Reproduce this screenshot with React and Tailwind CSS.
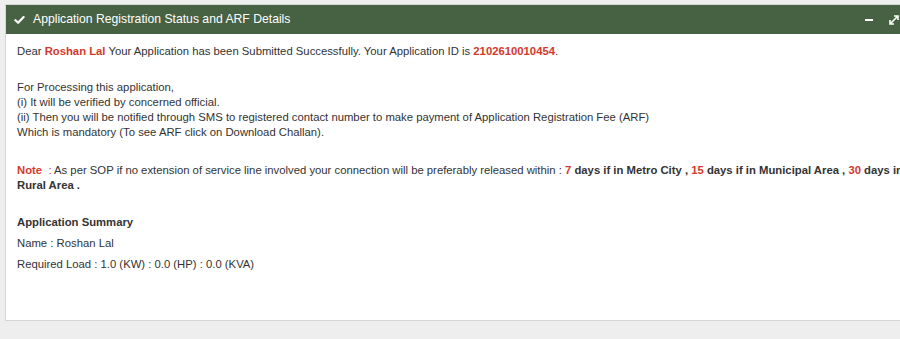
export default function App() {
  return (
    <div className="w-[900px] h-[339px] overflow-hidden bg-[#eeeeee] pt-[4px] pl-[5px] font-['Liberation_Sans',Arial,sans-serif]">
      <div className="w-[920px] border border-[#d6d6d6] bg-white">
        {/* Header */}
        <div className="h-[29px] bg-[#476243] flex items-center text-white">
          <svg className="ml-[8px] w-[11px] h-[10px]" viewBox="0 0 12 10" fill="none">
            <path d="M1.5 5.2 L4.5 8 L10.5 1.8" stroke="white" strokeWidth="2.4" strokeLinecap="round" strokeLinejoin="round" />
          </svg>
          <span className="ml-[8px] text-[12.2px]">Application Registration Status and ARF Details</span>
          <div className="ml-auto mr-[24px] flex items-center gap-[15px]">
            <span className="block w-[8px] h-[2px] bg-white" />
            <svg className="w-[12px] h-[12px]" viewBox="0 0 12 12" fill="none">
              <path d="M2 10 L10 2 M6 2 H10 V6 M2 6 V10 H6" stroke="white" strokeWidth="1.6" />
            </svg>
          </div>
        </div>

        {/* Body */}
        <div className="pl-[11px] pt-[10px] h-[286px] text-[11.3px] leading-[15px] text-[#333333]">
          <p>
            Dear <b className="text-[#d4382c]">Roshan Lal</b> Your Application has been Submitted Successfully. Your Application ID is{" "}
            <b className="text-[#d4382c]">2102610010454</b>.
          </p>

          <div className="mt-[21px]">
            <p>For Processing this application,</p>
            <p>(i) It will be verified by concerned official.</p>
            <p>(ii) Then you will be notified through SMS to registered contact number to make payment of Application Registration Fee (ARF)</p>
            <p>Which is mandatory (To see ARF click on Download Challan).</p>
          </div>

          <div className="mt-[23px]">
            <p className="whitespace-nowrap">
              <b className="text-[#d4382c]">Note</b>
              <span className="text-[#d4382c]"> &nbsp;: </span>As per SOP if no extension of service line involved your connection will be preferably released within :{" "}
              <b className="text-[#d4382c]">7</b> <b>days if in Metro City ,</b> <b className="text-[#d4382c]">15</b>{" "}
              <b>days if in Municipal Area ,</b> <b className="text-[#d4382c]">30</b> <b>days in</b>
            </p>
            <p><b>Rural Area .</b></p>
          </div>

          <div className="mt-[22px]">
            <p className="font-bold">Application Summary</p>
            <p className="mt-[6px]">Name : Roshan Lal</p>
            <p className="mt-[6px]">Required Load : 1.0 (KW) : 0.0 (HP) : 0.0 (KVA)</p>
          </div>
        </div>
      </div>
    </div>
  );
}
